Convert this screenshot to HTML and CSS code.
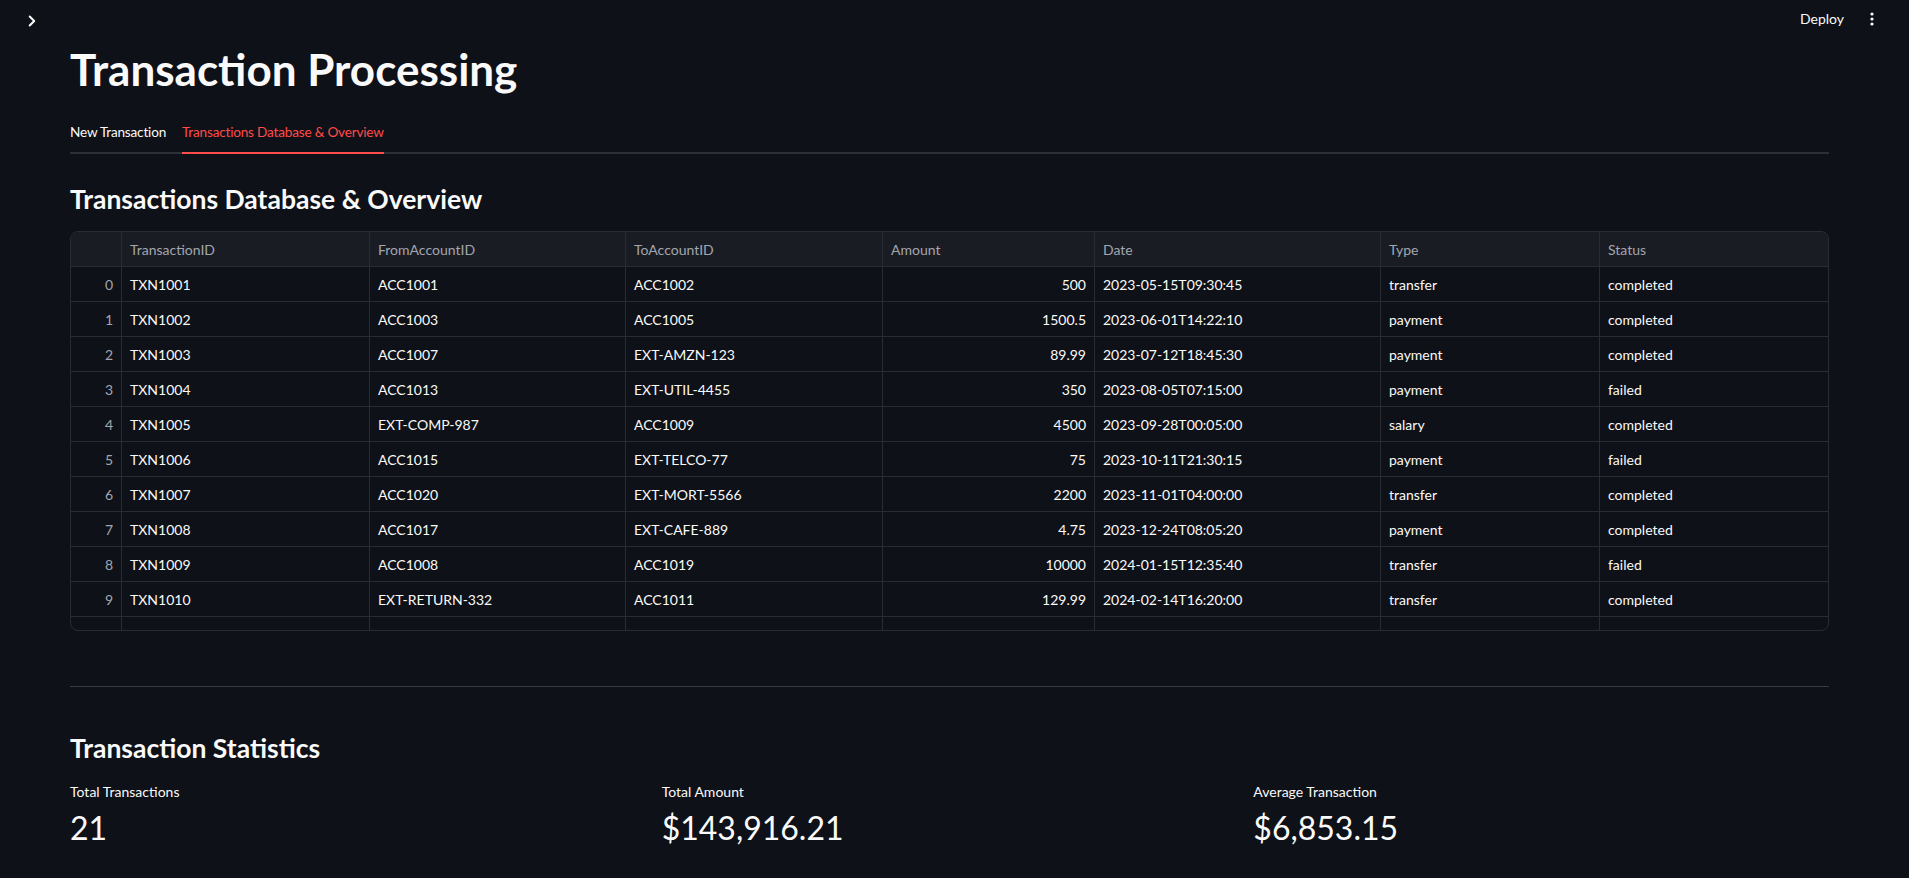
FILE: index.html
```
<!DOCTYPE html>
<html lang="en">
<head>
<meta charset="utf-8">
<title>Transaction Processing</title>
<link rel="stylesheet" href="styles.css">
</head>
<body>
<header class="topbar">
  <div class="sidebar-toggle">
    <svg width="8" height="12" viewBox="0 0 8 12"><path d="M1.7 1.5 L6.2 6 L1.7 10.5" fill="none" stroke="#fafafa" stroke-width="2" stroke-linecap="round" stroke-linejoin="round"/></svg>
  </div>
  <div class="toolbar">
    <span class="deploy">Deploy</span>
    <svg class="kebab" width="4" height="14" viewBox="0 0 4 14"><circle cx="2" cy="2" r="1.6" fill="#fafafa"/><circle cx="2" cy="7" r="1.6" fill="#fafafa"/><circle cx="2" cy="12" r="1.6" fill="#fafafa"/></svg>
  </div>
</header>
<main class="main">
  <h1 class="title">Transaction Processing</h1>
  <nav class="tabs">
    <div class="tab">New Transaction</div>
    <div class="tab active">Transactions Database &amp; Overview</div>
  </nav>

  <h3 class="section-title first">Transactions Database &amp; Overview</h3>
  <div class="grid">
    <div class="grid-row grid-head">
      <div class="cell idx"></div>
      <div class="cell">TransactionID</div>
      <div class="cell">FromAccountID</div>
      <div class="cell">ToAccountID</div>
      <div class="cell">Amount</div>
      <div class="cell">Date</div>
      <div class="cell">Type</div>
      <div class="cell last">Status</div>
    </div>
    <div class="grid-row"><div class="cell idx">0</div><div class="cell">TXN1001</div><div class="cell">ACC1001</div><div class="cell">ACC1002</div><div class="cell num">500</div><div class="cell">2023-05-15T09:30:45</div><div class="cell">transfer</div><div class="cell last">completed</div></div>
    <div class="grid-row"><div class="cell idx">1</div><div class="cell">TXN1002</div><div class="cell">ACC1003</div><div class="cell">ACC1005</div><div class="cell num">1500.5</div><div class="cell">2023-06-01T14:22:10</div><div class="cell">payment</div><div class="cell last">completed</div></div>
    <div class="grid-row"><div class="cell idx">2</div><div class="cell">TXN1003</div><div class="cell">ACC1007</div><div class="cell">EXT-AMZN-123</div><div class="cell num">89.99</div><div class="cell">2023-07-12T18:45:30</div><div class="cell">payment</div><div class="cell last">completed</div></div>
    <div class="grid-row"><div class="cell idx">3</div><div class="cell">TXN1004</div><div class="cell">ACC1013</div><div class="cell">EXT-UTIL-4455</div><div class="cell num">350</div><div class="cell">2023-08-05T07:15:00</div><div class="cell">payment</div><div class="cell last">failed</div></div>
    <div class="grid-row"><div class="cell idx">4</div><div class="cell">TXN1005</div><div class="cell">EXT-COMP-987</div><div class="cell">ACC1009</div><div class="cell num">4500</div><div class="cell">2023-09-28T00:05:00</div><div class="cell">salary</div><div class="cell last">completed</div></div>
    <div class="grid-row"><div class="cell idx">5</div><div class="cell">TXN1006</div><div class="cell">ACC1015</div><div class="cell">EXT-TELCO-77</div><div class="cell num">75</div><div class="cell">2023-10-11T21:30:15</div><div class="cell">payment</div><div class="cell last">failed</div></div>
    <div class="grid-row"><div class="cell idx">6</div><div class="cell">TXN1007</div><div class="cell">ACC1020</div><div class="cell">EXT-MORT-5566</div><div class="cell num">2200</div><div class="cell">2023-11-01T04:00:00</div><div class="cell">transfer</div><div class="cell last">completed</div></div>
    <div class="grid-row"><div class="cell idx">7</div><div class="cell">TXN1008</div><div class="cell">ACC1017</div><div class="cell">EXT-CAFE-889</div><div class="cell num">4.75</div><div class="cell">2023-12-24T08:05:20</div><div class="cell">payment</div><div class="cell last">completed</div></div>
    <div class="grid-row"><div class="cell idx">8</div><div class="cell">TXN1009</div><div class="cell">ACC1008</div><div class="cell">ACC1019</div><div class="cell num">10000</div><div class="cell">2024-01-15T12:35:40</div><div class="cell">transfer</div><div class="cell last">failed</div></div>
    <div class="grid-row"><div class="cell idx">9</div><div class="cell">TXN1010</div><div class="cell">EXT-RETURN-332</div><div class="cell">ACC1011</div><div class="cell num">129.99</div><div class="cell">2024-02-14T16:20:00</div><div class="cell">transfer</div><div class="cell last">completed</div></div>
    <div class="grid-row"><div class="cell idx">10</div><div class="cell">TXN1011</div><div class="cell">ACC1012</div><div class="cell">ACC1014</div><div class="cell num">300</div><div class="cell">2024-03-02T10:10:00</div><div class="cell">transfer</div><div class="cell last">completed</div></div>
  </div>

  <hr class="divider">

  <h3 class="section-title stats">Transaction Statistics</h3>
  <div class="metrics">
    <div class="metric"><div class="metric-label">Total Transactions</div><div class="metric-value">21</div></div>
    <div class="metric"><div class="metric-label">Total Amount</div><div class="metric-value">$143,916.21</div></div>
    <div class="metric"><div class="metric-label">Average Transaction</div><div class="metric-value">$6,853.15</div></div>
  </div>
</main>
</body>
</html>
```
FILE: styles.css
```
* { box-sizing: border-box; }
html, body {
  margin: 0;
  padding: 0;
  background: #0e1117;
  color: #fafafa;
  font-family: Lato, "Noto Sans", sans-serif;
  font-size: 14px;
}
.topbar {
  height: 40px;
  display: flex;
  align-items: center;
  justify-content: space-between;
  padding: 0 35px 0 28px;
}
.sidebar-toggle {
  display: flex;
  margin-top: 2px;
}
.toolbar {
  display: flex;
  align-items: center;
  gap: 26px;
  margin-top: -3px;
}
.deploy {
  font-size: 14px;
  line-height: 20px;
  color: #fafafa;
}
.kebab { display: block; }

.main {
  padding: 0 80px 40px 70px;
}
.title {
  margin: 3px 0 0;
  font-size: 44px;
  line-height: 52px;
  font-weight: 700;
}
.tabs {
  margin-top: 27px;
  display: flex;
  gap: 16px;
  border-bottom: 2px solid #2d2f36;
}
.tab {
  font-size: 13.6px;
  letter-spacing: -0.2px;
  line-height: 20px;
  padding-bottom: 10px;
  margin-bottom: -2px;
  border-bottom: 2px solid transparent;
  color: #fafafa;
}
.tab.active {
  color: #ff4b4b;
  border-bottom-color: #ff4b4b;
}
.section-title {
  margin: 0;
  font-size: 26.5px;
  line-height: 34px;
  font-weight: 700;
}
.section-title.first { margin-top: 28px; }
.section-title.stats { margin-top: 44px; }

.grid {
  margin-top: 15px;
  height: 400px;
  border: 1px solid #2a2c33;
  border-radius: 8px;
  overflow: hidden;
}
.grid-row {
  display: grid;
  grid-template-columns: 51px 248px 256px 257px 212px 286px 219px 228px;
  height: 35px;
  border-bottom: 1px solid #2a2c33;
}
.grid-head {
  background: #1a1c24;
  color: #a3a6ae;
}
.cell {
  display: flex;
  align-items: center;
  padding: 0 8px;
  border-right: 1px solid #2a2c33;
  white-space: nowrap;
  overflow: hidden;
  font-size: 14px;
}
.cell.last { border-right: none; }
.cell.idx {
  justify-content: flex-end;
  color: #a3a6ae;
}
.cell.num { justify-content: flex-end; }

.divider {
  margin: 55px 0 0;
  border: none;
  border-top: 1px solid #3a3c43;
  height: 0;
}
.metrics {
  margin-top: 17px;
  display: grid;
  grid-template-columns: 1fr 1fr 1fr;
  gap: 16px;
}
.metric-label {
  font-size: 14px;
  line-height: 20px;
}
.metric-value {
  margin-top: 4px;
  font-size: 32px;
  line-height: 44px;
  font-weight: 400;
}
```
